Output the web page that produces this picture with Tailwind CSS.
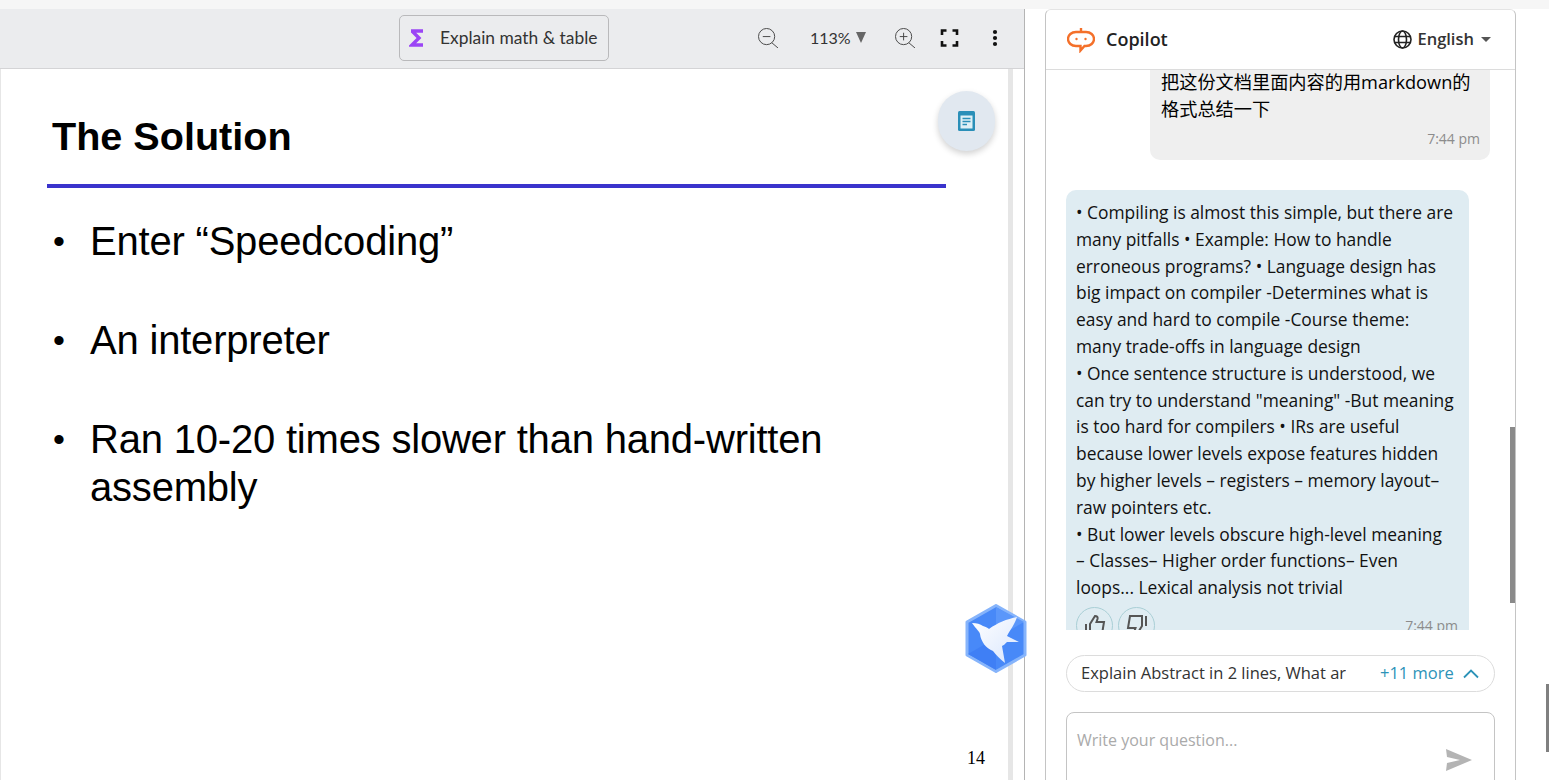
<!DOCTYPE html>
<html lang="en">
<head>
  <meta charset="UTF-8">
  <title>Copilot PDF</title>
  <script src="https://cdn.jsdelivr.net/npm/@tailwindcss/browser@4"></script>
</head>
<body class="relative h-[780px] w-[1549px] overflow-hidden bg-white font-['Open_Sans',sans-serif] text-black">
  <div class="h-[9px] bg-[#f6f6f6]"></div>
  <div class="flex h-[771px]">
    <!-- PDF viewer -->
    <section class="relative w-[1025px] shrink-0 overflow-hidden border-r border-[#b4b4b4]">
      <header class="flex h-[60px] items-center border-b border-[#d4d4d6] bg-[#ebecee] pb-[2px] pl-[399px] font-['Lato',sans-serif]">
        <button class="flex h-[46px] w-[210px] items-center rounded-[5px] border border-[#b9b9bb] pl-[9px] text-[17.400px] text-[#333]">
          <svg class="h-[20px] w-[16px]" viewBox="0 0 16 20"><path d="M2 3h12M3 3l7 7-7 7h11" fill="none" stroke="#9b45f5" stroke-width="3.400" stroke-linejoin="miter"/></svg>
          <span class="ml-[15px] pt-[1px]">Explain math &amp; table</span>
        </button>
        <svg class="ml-[148px] h-[20px] w-[23px]" viewBox="0 0 24 21" fill="none" stroke="#444" stroke-width="1"><circle cx="10" cy="9" r="8.500"/><path d="M15.500 15.500l6.500 5.500M6 9h8"/></svg>
        <span class="ml-[30px] text-[16px] text-[#333]">113%</span>
        <span class="ml-[5px] h-0 w-0 border-x-[5.500px] border-t-[11px] border-x-transparent border-t-[#666]"></span>
        <svg class="ml-[28px] h-[20px] w-[23px]" viewBox="0 0 24 21" fill="none" stroke="#444" stroke-width="1"><circle cx="10" cy="9" r="8.500"/><path d="M15.500 15.500l6.500 5.500M6 9h8M10 5v8"/></svg>
        <svg class="ml-[23px] h-[18px] w-[19px]" viewBox="0 0 18 18" fill="none" stroke="#111" stroke-width="2.600"><path d="M1.500 6V1.500H6M12 1.500h4.500V6M16.500 12v4.500H12M6 16.500H1.500V12"/></svg>
        <svg class="ml-[33px] h-[18px] w-[6px]" viewBox="0 0 6 18" fill="#111"><circle cx="3" cy="3" r="2.100"/><circle cx="3" cy="9" r="2.100"/><circle cx="3" cy="15" r="2.100"/></svg>
      </header>

      <div class="relative h-[711px] border-l border-[#e6e6e6] pl-[46px] font-['Liberation_Sans',sans-serif]">
        <h1 class="pl-[5px] pt-[42px] text-[39.600px] font-bold leading-[50px]">The Solution</h1>
        <div class="mt-[23px] h-[4px] w-[899px] bg-[#3a33cc]"></div>
        <ul class="mt-[29px] text-[40px] leading-[48px] tracking-[-0.2px]">
          <li class="flex"><span class="w-[43px] pl-[6px] text-[34px]">•</span><span>Enter “Speedcoding”</span></li>
          <li class="mt-[51px] flex"><span class="w-[43px] pl-[6px] text-[34px]">•</span><span>An interpreter</span></li>
          <li class="mt-[51px] flex"><span class="w-[43px] pl-[6px] text-[34px]">•</span><span class="w-[780px]">Ran 10-20 times slower than hand-written assembly</span></li>
        </ul>
        <span class="absolute left-[966px] top-[676px] font-['Liberation_Serif',serif] text-[18px]">14</span>
      </div>

      <!-- viewer scrollbar track -->
      <div class="absolute right-[11px] top-[60px] h-[711px] w-[5px] bg-[#e6e6e6]"></div>
      <button class="absolute left-[938px] top-[82px] flex h-[60px] w-[57px] items-center justify-center rounded-full bg-[#e1e8f0] shadow-[0_3px_6px_rgba(0,0,0,0.18)]">
        <svg class="h-[20px] w-[17px]" viewBox="0 0 17 20"><rect width="17" height="20" rx="1.500" fill="#2a8fb8"/><path d="M2.500 4.500h12V17.500h-12z" fill="#dff0f6"/><path d="M4.500 7.500h8M4.500 10.500h8M4.500 13.500h4.500" stroke="#2a8fb8" stroke-width="1.500"/></svg>
      </button>
    </section>

    <!-- Copilot panel -->
    <aside class="ml-[20px] flex h-[771px] w-[471px] shrink-0 flex-col rounded-t-[6px] border-x border-t border-[#c4c4c4] border-t-[#e4e4e4]">
      <header class="flex h-[60px] shrink-0 items-center border-b border-[#dcdcdc] pl-[21px] pr-[24px]">
        <svg class="h-[26px] w-[28px]" viewBox="0 0 28 26" fill="none" stroke="#f4702a" stroke-width="2.400"><path d="M14 1v3.500"/><path d="M9 5h10c4.500 0 8 3 8 7s-3.500 7-8 7h-1.500l-4 4.500v-4.500H9c-4.500 0-8-3-8-7s3.500-7 8-7z"/><circle cx="9.500" cy="12" r="1.200" fill="#f4702a" stroke="none"/><circle cx="18.500" cy="12" r="1.200" fill="#f4702a" stroke="none"/></svg>
        <span class="ml-[11px] text-[18px] font-semibold text-[#222]">Copilot</span>
        <svg class="ml-auto h-[19px] w-[19px]" viewBox="0 0 19 19" fill="none" stroke="#222" stroke-width="1.600"><circle cx="9.500" cy="9.500" r="8.500"/><ellipse cx="9.500" cy="9.500" rx="4" ry="8.500"/><path d="M1.500 6.500h16M1.500 12.500h16"/></svg>
        <span class="ml-[5px] text-[16.500px] font-semibold text-[#333]">English</span>
        <span class="ml-[7px] h-0 w-0 border-x-[5px] border-t-[5px] border-x-transparent border-t-[#555]"></span>
      </header>

      <div class="h-[560px] shrink-0 overflow-hidden">
        <div class="ml-[104px] h-[91px] w-[340px] rounded-b-[10px] bg-[#efefef] pl-[11px] font-['Open_Sans','Noto_Sans_CJK_SC',sans-serif] text-[18.200px] leading-[26.500px]">
          <p class="-mt-[1px]">把这份文档里面内容的用markdown的<br>格式总结一下</p>
          <p class="mt-[7px] pr-[10px] text-right text-[14px] leading-[20px] text-[#8c8c8c]">7:44 pm</p>
        </div>
        <div class="ml-[20px] mt-[30px] h-[440px] w-[403px] rounded-t-[10px] bg-[#dfecf2] pl-[10px] pr-[11px] pt-[9px] text-[17.400px] leading-[26.800px] text-[#111]">
          <p>• Compiling is almost this simple, but there are many pitfalls • Example: How to handle erroneous programs? • Language design has big impact on compiler -Determines what is easy and hard to compile -Course theme: many trade-offs in language design<br>• Once sentence structure is understood, we can try to understand "meaning" -But meaning is too hard for compilers • IRs are useful because lower levels expose features hidden by higher levels – registers – memory layout– raw pointers etc.<br>• But lower levels obscure high-level meaning<br>– Classes– Higher order functions– Even<br>loops... Lexical analysis not trivial</p>
          <div class="mt-[6px] flex items-start">
            <span class="flex h-[37px] w-[37px] items-center justify-center rounded-full border border-[#a9cfd6]">
              <svg class="h-[22px] w-[22px]" viewBox="0 0 22 22" fill="none" stroke="#555" stroke-width="2"><path d="M2 10v10M6 10l5-8c2 0 3 1 2.500 3L12.500 8H20l-2 12H6z"/></svg>
            </span>
            <span class="ml-[5px] flex h-[37px] w-[37px] items-center justify-center rounded-full border border-[#a9cfd6]">
              <svg class="h-[22px] w-[22px]" viewBox="0 0 22 22" fill="none" stroke="#555" stroke-width="2"><path d="M20 2v10M16 12l-5 8c-2 0-3-1-2.500-3l1-3H2L4 2h12z"/></svg>
            </span>
            <span class="ml-auto pt-[9px] text-[14px] leading-[20px] text-[#8c8c8c]">7:44 pm</span>
          </div>
        </div>
      </div>

      <div class="ml-[20px] mt-[25px] flex h-[37px] w-[429px] shrink-0 items-center rounded-full border border-[#dcdcdc] pl-[14px] pr-[15px] text-[16.500px]">
        <span class="w-[265px] overflow-hidden whitespace-nowrap text-[#333]">Explain Abstract in 2 lines, What ar</span>
        <span class="ml-[34px] whitespace-nowrap text-[#2c93b8]">+11 more</span>
        <svg class="ml-auto h-[10px] w-[16px]" viewBox="0 0 16 10" fill="none" stroke="#2c93b8" stroke-width="1.800"><path d="M1 8.500l7-7 7 7"/></svg>
      </div>

      <div class="relative ml-[20px] mt-[20px] h-[90px] w-[429px] shrink-0 rounded-t-[8px] border border-[#c4c4c4] pl-[10px] pt-[16px] text-[16px] leading-[22px] text-[#aaa]">
        Write your question...
        <svg class="absolute left-[379px] top-[36px] h-[22px] w-[26px]" viewBox="0 0 26 22" fill="#b4b4b4"><path d="M0 0l26 11L0 22l1-8 13-3-13-3z"/></svg>
      </div>
    </aside>
  </div>

  <!-- chat scrollbar, page scrollbar -->
  <div class="absolute left-[1510px] top-[427px] h-[176px] w-[5px] bg-[#8a8a8a]"></div>
  <div class="absolute left-[1546px] top-[684px] h-[68px] w-[3px] bg-[#808080]"></div>

  <!-- download helper badge floating over the page -->
  <svg class="absolute left-[965px] top-[604px] h-[69px] w-[62px]" viewBox="0 0 62 69">
    <defs>
      <linearGradient id="bird" x1="0" y1="0" x2="1" y2="1"><stop offset="0" stop-color="#ffffff"/><stop offset="1" stop-color="#d9e6fd"/></linearGradient>
    </defs>
    <path d="M31 1.500l29 16.500v33l-29 16.500L2 51V18z" fill="#4889f8" stroke="#86b4fb" stroke-width="3" stroke-linejoin="round"/>
    <path d="M31 3v31l28-16z" fill="#5b97fa"/>
    <path d="M31 34L3 50l28 16z" fill="#3f7ff5"/>
    <path d="M7 19c5 0 8 1 11 3 3 1 5 2 6 3 8-6 18-10 28-12-2 7-7 13-10 19l12 6-12 0c-2 2-3 3-5 4l3 17c-5-4-9-8-12-12-7-3-12-9-13-17 0-2-4-5-8-11z" fill="url(#bird)"/>
  </svg>
</body>
</html>
